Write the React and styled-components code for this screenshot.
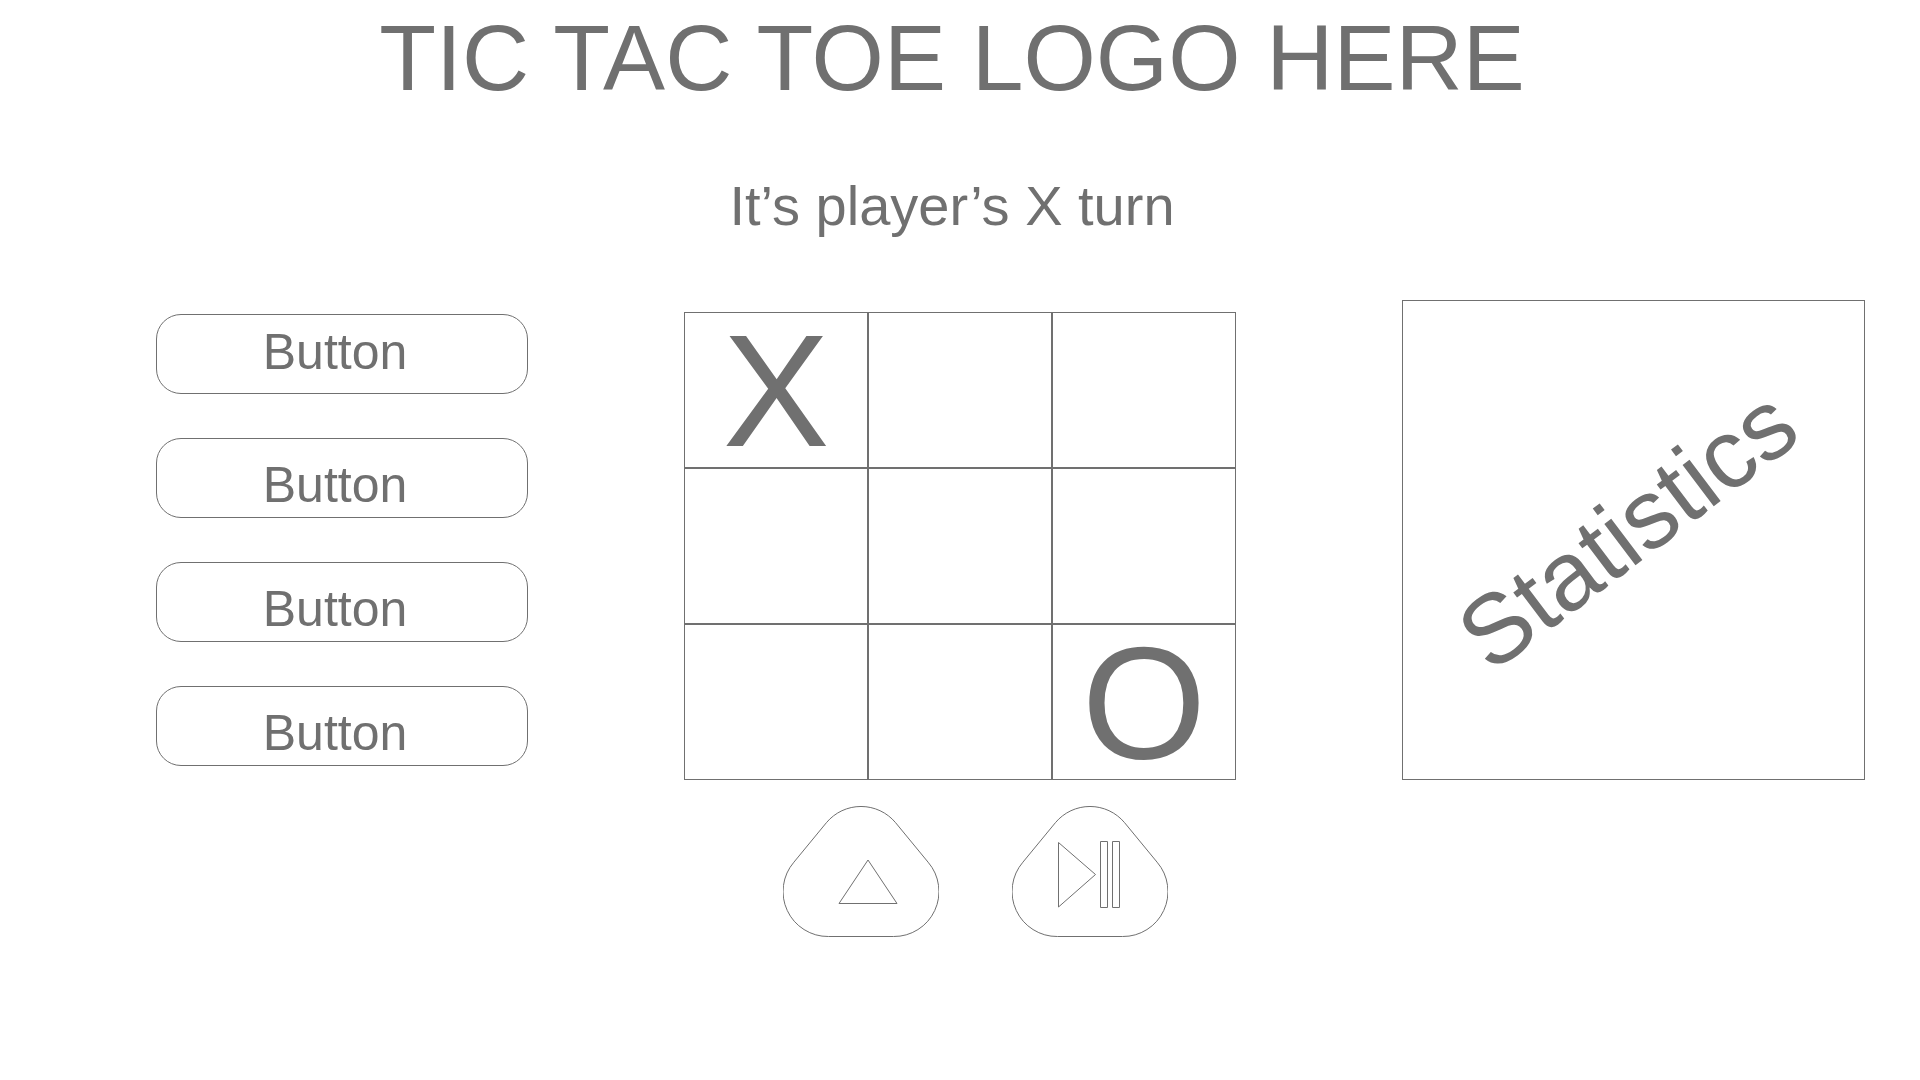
import React, { useState } from 'react';
import styled, { createGlobalStyle } from 'styled-components';

const ink = '#707070';

const GlobalStyle = createGlobalStyle`
  *, *::before, *::after { box-sizing: border-box; }
  body {
    margin: 0;
    background: #fff;
    color: ${ink};
    font-family: "Liberation Sans", Arial, sans-serif;
  }
  button { font: inherit; color: inherit; cursor: pointer; }
`;

const Header = styled.header`
  display: flex;
  flex-direction: column;
  align-items: center;
  gap: 66px;
  padding: 8px 16px 0 0;
  text-align: center;
`;

const Title = styled.h1`
  margin: 0;
  font-size: 93px;
  line-height: 100px;
  font-weight: 400;
`;

const Status = styled.p`
  margin: 0;
  font-size: 56px;
  line-height: 64px;
`;

const Main = styled.main`
  display: grid;
  grid-template-columns: 372fr 552fr 473fr;
  column-gap: 156px;
  align-items: start;
  padding: 62px 55px 0 156px;
`;

const Menu = styled.nav`
  display: flex;
  flex-direction: column;
  gap: 44px;
  padding-top: 14px;
`;

const MenuButton = styled.button`
  height: 80px;
  padding: ${({ $label }) => ($label === 'high' ? '9px 14px 0 0' : '18px 14px 0 0')};
  display: flex;
  align-items: flex-start;
  justify-content: center;
  border: 1px solid ${ink};
  border-radius: 25px;
  background: none;
  font-size: 50px;
  line-height: 56px;
`;

const Game = styled.section`
  padding-top: 12px;
`;

const Board = styled.div`
  display: grid;
  grid-template-columns: repeat(3, 1fr);
`;

const Cell = styled.button`
  height: 156px;
  padding: 2px 0 0;
  border: 1px solid ${ink};
  background: none;
  font-size: 160px;
  line-height: 152px;
`;

const Controls = styled.div`
  display: flex;
  justify-content: center;
  gap: 73px;
  padding: 26px 0 0 31px;
`;

const ControlButton = styled.button`
  padding: 0;
  border: 0;
  background: none;

  svg {
    display: block;
    fill: none;
    stroke: ${ink};
  }
`;

const StatsPanel = styled.aside`
  display: flex;
  align-items: center;
  justify-content: center;
  height: 480px;
  margin-left: 10px;
  padding: 0 12px 22px 0;
  border: 1px solid ${ink};
`;

const StatsTitle = styled.h2`
  margin: 0;
  font-size: 98px;
  line-height: 112px;
  font-weight: 400;
  transform: rotate(-37deg);
`;

const menu = [
  { id: 1, label: 'high' },
  { id: 2, label: 'low' },
  { id: 3, label: 'low' },
  { id: 4, label: 'low' },
];

function Control({ name, children }) {
  return (
    <ControlButton type="button" aria-label={name}>
      <svg width="156" height="131" viewBox="0 0 156 131" aria-hidden="true">
        <path d="M45.5 130.5H110.5A45 45 0 0 0 145.1 56.2L112.6 16.7A45 45 0 0 0 43.4 16.7L10.9 56.2A45 45 0 0 0 45.5 130.5Z" />
        {children}
      </svg>
    </ControlButton>
  );
}

export default function App() {
  const [cells, setCells] = useState(['X', '', '', '', '', '', '', '', 'O']);
  const play = (index) =>
    setCells((now) => now.map((mark, i) => (i === index && !mark ? 'X' : mark)));

  return (
    <>
      <GlobalStyle />
      <Header>
        <Title>TIC TAC TOE LOGO HERE</Title>
        <Status>It’s player’s X turn</Status>
      </Header>
      <Main>
        <Menu>
          {menu.map(({ id, label }) => (
            <MenuButton key={id} type="button" $label={label}>
              Button
            </MenuButton>
          ))}
        </Menu>
        <Game>
          <Board>
            {cells.map((mark, i) => (
              <Cell
                key={i}
                type="button"
                aria-label={`Cell ${i + 1} ${mark}`}
                onClick={() => play(i)}
              >
                {mark}
              </Cell>
            ))}
          </Board>
          <Controls>
            <Control name="Up">
              <path d="M85 54L56 97.5H114Z" />
            </Control>
            <Control name="Play or pause">
              <path d="M46.5 36.5V101L83.5 68.5Z" />
              <path d="M88.5 35.5H95.5V101.5H88.5ZM100.5 35.5H107.5V101.5H100.5Z" />
            </Control>
          </Controls>
        </Game>
        <StatsPanel>
          <StatsTitle>Statistics</StatsTitle>
        </StatsPanel>
      </Main>
    </>
  );
}
